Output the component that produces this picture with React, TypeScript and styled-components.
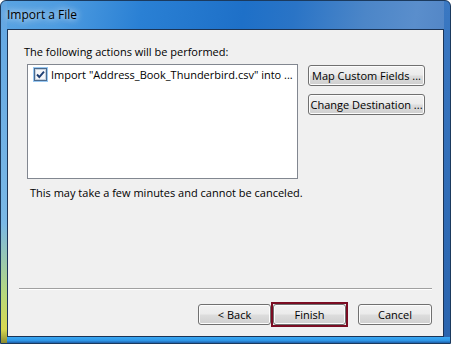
import styled, { createGlobalStyle } from "styled-components";

const GlobalStyle = createGlobalStyle`
  html, body {
    margin: 0;
    padding: 0;
    background: #ffffff;
  }
  body {
    font-family: "Open Sans", "Noto Sans", sans-serif;
    font-size: 11px;
  }
`;

const CheckIcon = (): JSX.Element => (
  <svg width="13" height="13" viewBox="0 0 13 13">
    <rect x="0.5" y="0.5" width="12" height="12" fill="#f4f6f9" stroke="#4a6a8e" />
    <rect x="1.5" y="1.5" width="10" height="10" fill="none" stroke="#c4d0de" />
    <path d="M3 6.5 L5.3 9 L10 3.6" fill="none" stroke="#1d3e73" strokeWidth="1.9" />
  </svg>
);

export default function App(): JSX.Element {
  return (
    <>
      <GlobalStyle />
      <Window>
        <TitleBar>Import a File</TitleBar>
        <Client>
          <Body>
            <Label>The following actions will be performed:</Label>
            <ListRow>
              <ListBox>
                <ListItem>
                  <CheckCell>
                    <CheckIcon />
                  </CheckCell>
                  <ItemText>Import "Address_Book_Thunderbird.csv" into ...</ItemText>
                </ListItem>
              </ListBox>
              <SideButtons>
                <Button width={117}>Map Custom Fields ...</Button>
                <Button width={117}>Change Destination ...</Button>
              </SideButtons>
            </ListRow>
            <Note>This may take a few minutes and cannot be canceled.</Note>
          </Body>
          <Separator />
          <Footer>
            <Button width={73}>&lt; Back</Button>
            <FocusRing>
              <Button width={73}>Finish</Button>
            </FocusRing>
            <Button width={74} gapLeft={10}>Cancel</Button>
          </Footer>
        </Client>
      </Window>
    </>
  );
}

const Window = styled.div`
  width: 451px;
  height: 344px;
  box-sizing: border-box;
  display: flex;
  flex-direction: column;
  border: 1px solid #1b3a5e;
  border-radius: 6px 6px 0 0;
  overflow: hidden;
  background:
    linear-gradient(180deg, #62a6e2 0%, #7ab8e6 65%, #b8d87c 86%, #d8d850 96%, #8a8a30 100%) left top / 6px 100% no-repeat,
    linear-gradient(180deg, #3aa8f2 0%, #2f96e6 60%, #1f5ea8 100%) left bottom / 100% 6px no-repeat,
    linear-gradient(180deg, #3a78c2 0%, #2a64ae 100%) right top / 6px 100% no-repeat,
    linear-gradient(100deg, #5aa4e2 0%, #4e9ce0 12%, #2a80d4 28%, #1e70c8 48%, #2a74c6 58%, #4c86c8 72%, #5a8ecc 82%, #4678bc 100%);
`;

const TitleBar = styled.div`
  height: 28px;
  flex: none;
  display: flex;
  align-items: center;
  padding: 0 0 2px 6px;
  box-sizing: border-box;
  color: #000000;
  font-size: 12px;
  text-shadow: 0 0 6px rgba(255, 255, 255, 0.85), 0 0 10px rgba(255, 255, 255, 0.6);
`;

const Client = styled.div`
  flex: 1;
  margin: 0 6px 6px 6px;
  border: 1px solid #1b3456;
  background: #f0f0f0;
  display: flex;
  flex-direction: column;
`;

const Body = styled.div`
  flex: 1;
  padding: 14px 0 0 16px;
  display: flex;
  flex-direction: column;
`;

const Label = styled.div`
  color: #000000;
  line-height: 16px;
  height: 16px;
`;

const ListRow = styled.div`
  display: flex;
  align-items: flex-start;
  margin: 4px 0 0 3px;
  gap: 10px;
`;

const ListBox = styled.div`
  width: 271px;
  height: 115px;
  box-sizing: border-box;
  border: 1px solid #828790;
  background: #ffffff;
  padding: 1px 4px 0 5px;
`;

const ListItem = styled.div`
  display: flex;
  align-items: center;
  gap: 3px;
  height: 16px;
  white-space: nowrap;
  overflow: hidden;
`;

const CheckCell = styled.span`
  width: 15px;
  height: 15px;
  flex: none;
  display: flex;
  align-items: center;
  justify-content: center;
  background: #99c8f2;
`;

const ItemText = styled.span`
  color: #000000;
`;

const SideButtons = styled.div`
  display: flex;
  flex-direction: column;
  gap: 8px;
  margin-top: 1px;
`;

const Button = styled.button<{ width: number; gapLeft?: number }>`
  width: ${({ width }) => width}px;
  height: 21px;
  margin-left: ${({ gapLeft }) => gapLeft ?? 0}px;
  box-sizing: border-box;
  padding: 0;
  border: 1px solid #707070;
  border-radius: 3px;
  box-shadow: inset 0 0 0 1px #fcfcfc;
  background: linear-gradient(180deg, #f2f2f2 0%, #ebebeb 48%, #dddddd 52%, #cfcfcf 100%);
  font-family: "Open Sans", "Noto Sans", sans-serif;
  font-size: 11px;
  color: #000000;
  white-space: nowrap;
  overflow: hidden;
`;

const FocusRing = styled.div`
  display: flex;
  border: 2px solid #7a0c22;
  margin: -2px 0;
`;

const Note = styled.div`
  margin: 6px 0 0 6px;
  color: #000000;
  line-height: 16px;
`;

const Separator = styled.div`
  height: 1px;
  margin: 0 11px;
  background: #a0a0a0;
  border-bottom: 1px solid #ffffff;
`;

const Footer = styled.div`
  display: flex;
  justify-content: flex-end;
  align-items: center;
  padding: 14px 11px 11px 0;
`;
